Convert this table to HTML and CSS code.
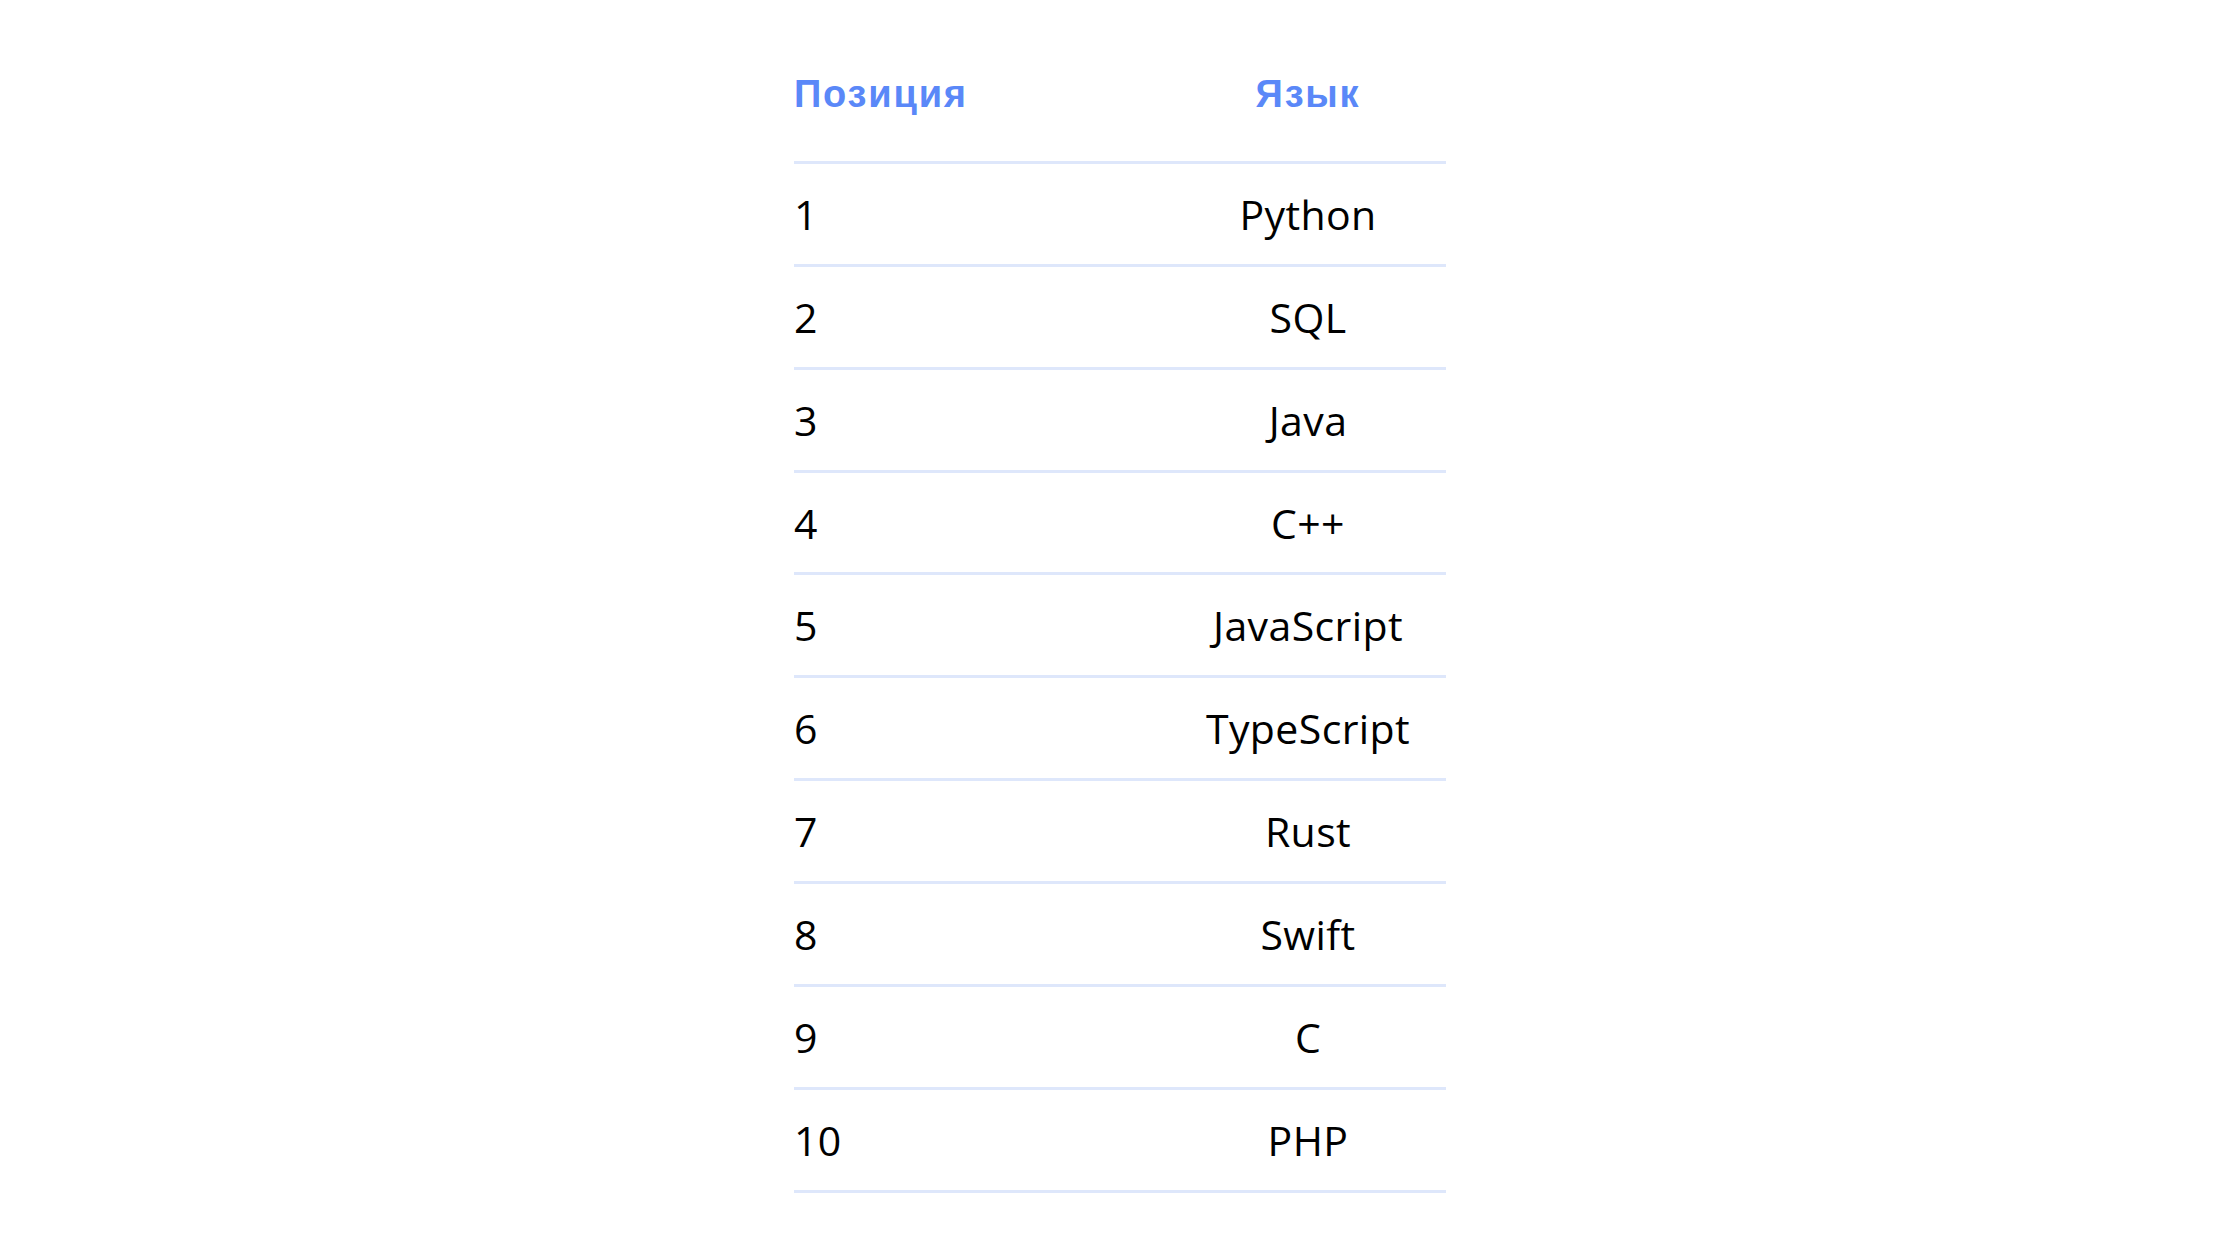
FILE: index.html
```html
<!DOCTYPE html>
<html lang="ru">
<head>
<meta charset="utf-8">
<title>Рейтинг языков</title>
<link rel="stylesheet" href="styles.css">
</head>
<body>
<div class="table">
  <div class="row head">
    <div class="cell pos">Позиция</div>
    <div class="cell lang">Язык</div>
  </div>
  <div class="row"><div class="cell pos">1</div><div class="cell lang">Python</div></div>
  <div class="row"><div class="cell pos">2</div><div class="cell lang">SQL</div></div>
  <div class="row"><div class="cell pos">3</div><div class="cell lang">Java</div></div>
  <div class="row"><div class="cell pos">4</div><div class="cell lang">C++</div></div>
  <div class="row"><div class="cell pos">5</div><div class="cell lang">JavaScript</div></div>
  <div class="row"><div class="cell pos">6</div><div class="cell lang">TypeScript</div></div>
  <div class="row"><div class="cell pos">7</div><div class="cell lang">Rust</div></div>
  <div class="row"><div class="cell pos">8</div><div class="cell lang">Swift</div></div>
  <div class="row"><div class="cell pos">9</div><div class="cell lang">C</div></div>
  <div class="row"><div class="cell pos">10</div><div class="cell lang">PHP</div></div>
</div>
</body>
</html>
```
FILE: styles.css
```css
html, body {
  margin: 0;
  padding: 0;
  background: #ffffff;
}
body {
  font-family: "Open Sans", "Noto Sans", sans-serif;
  color: #000000;
}
.table {
  width: 652px;
  margin: 0 auto;
  padding-top: 60px;
}
.row {
  display: grid;
  grid-template-columns: 376px 276px;
  align-items: center;
  height: 102.86px;
  box-sizing: border-box;
  border-bottom: 3px solid #dee7fb;
  font-size: 41px;
  letter-spacing: 0.4px;
}
.row.head {
  height: 104px;
  align-items: start;
  font-family: "Liberation Sans", Arial, sans-serif;
  font-weight: 700;
  font-size: 38px;
  letter-spacing: 1.8px;
  line-height: 1.15;
  color: #5a88f8;
  padding-top: 13px;
}
.cell.lang {
  text-align: center;
}
```
